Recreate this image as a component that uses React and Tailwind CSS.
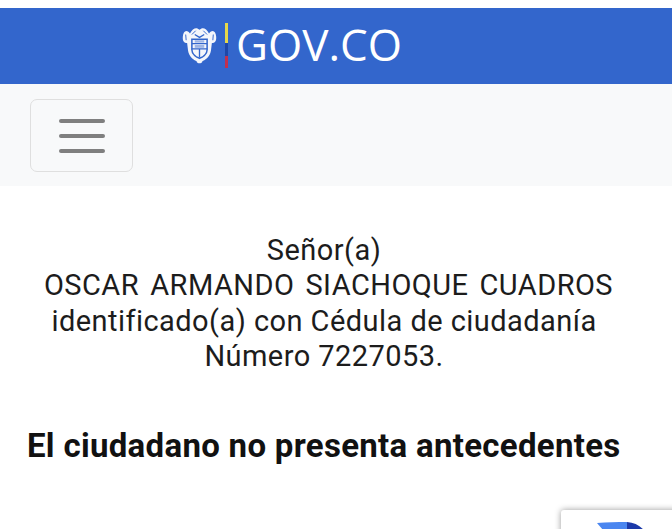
export default function App() {
  return (
    <div className="relative h-[529px] w-[672px] overflow-hidden bg-white font-['Roboto',sans-serif] text-[#212529]">
      <div className="h-2 bg-white" />
      <header className="flex h-[76px] items-center bg-[#3366cc] pl-[182px]">
        <svg width="35" height="40" viewBox="0 0 36 42" className="mt-[-2px] shrink-0" aria-hidden="true">
          <path d="M8 9 C4 4 1 7 0.5 12 C0 17 2 19 5 19 L6 27 C7 34 13 37 15 38 C15 41 21 41 21 38 C23 37 29 34 30 27 L31 19 C34 19 36 17 35.5 12 C35 7 32 4 28 9 C25 3 21 2 18 5 C15 2 11 3 8 9 Z" fill="#f4f6fb" />
          <path d="M3.5 10 L4 16 M32.5 10 L32 16 M10 10 L14 6 M26 10 L22 6" fill="none" stroke="#3366cc" strokeWidth="1" />
          <path d="M10 15 H26 V26 C26 31 21 34 18 35 C15 34 10 31 10 26 Z" fill="none" stroke="#3366cc" strokeWidth="1.6" />
          <path d="M10 19.5 H26 M10 25 H26 M18 25 V34 M13 10 L18 13 L23 10" fill="none" stroke="#3366cc" strokeWidth="1.4" />
          <rect x="13" y="16" width="10" height="2.5" fill="#9fb6e6" />
          <rect x="13" y="21" width="10" height="3" fill="#9fb6e6" />
        </svg>
        <div className="mb-[1px] ml-[8px] flex h-[45px] w-[3px] shrink-0 flex-col">
          <div className="h-[20px] bg-[#e6d84a]" />
          <div className="h-[13px] bg-[#1f47a8]" />
          <div className="h-[12px] bg-[#c0304f]" />
        </div>
        <span className="mb-[5px] ml-[8px] font-['Open_Sans',sans-serif] text-[44px] font-medium leading-none tracking-[0px] text-white">GOV.CO</span>
      </header>
      <nav className="flex h-[102px] items-start bg-[#f8f9fa] pl-[30px] pt-[15px]">
        <button className="flex h-[73px] w-[103px] flex-col items-center justify-center gap-[11px] rounded-[7px] border border-[#dfdfdf]">
          <span className="h-1 w-[46px] rounded-full bg-[#7f7f7f]" />
          <span className="h-1 w-[46px] rounded-full bg-[#7f7f7f]" />
          <span className="h-1 w-[46px] rounded-full bg-[#7f7f7f]" />
        </button>
      </nav>
      <main className="flex flex-col items-center pt-[47px]">
        <p className="w-full pr-[24px] text-center text-[29px] leading-[35.3px] tracking-[0.45px] text-[#1c1c1c]">
          Señor(a)
          <br />
          <span className="ml-[9px] [word-spacing:3.5px]">OSCAR ARMANDO SIACHOQUE CUADROS</span>
          <br />
          identificado(a) con Cédula de ciudadanía
          <br />
          Número 7227053.
        </p>
        <h1 className="mt-[53px] w-full pl-[27px] text-[33px] font-bold leading-[38px] tracking-[0.3px] text-[#111111]">
          El ciudadano no presenta antecedentes
        </h1>
      </main>
      <div className="absolute left-[561px] top-[510px] h-[60px] w-[130px] overflow-hidden rounded-[3px] bg-white shadow-[0_0_6px_rgba(0,0,0,0.4)]">
        <svg width="70" height="40" viewBox="0 0 70 40" className="absolute left-[36px] top-[12px]" aria-hidden="true">
          <path d="M0 1 C10 0 20 0 30 0 V22 L18 22 Z" fill="#4a86f0" />
          <path d="M30 0 C42 1 50 8 56 24 L46 30 L30 22 Z" fill="#1c3aa9" />
        </svg>
      </div>
    </div>
  );
}
